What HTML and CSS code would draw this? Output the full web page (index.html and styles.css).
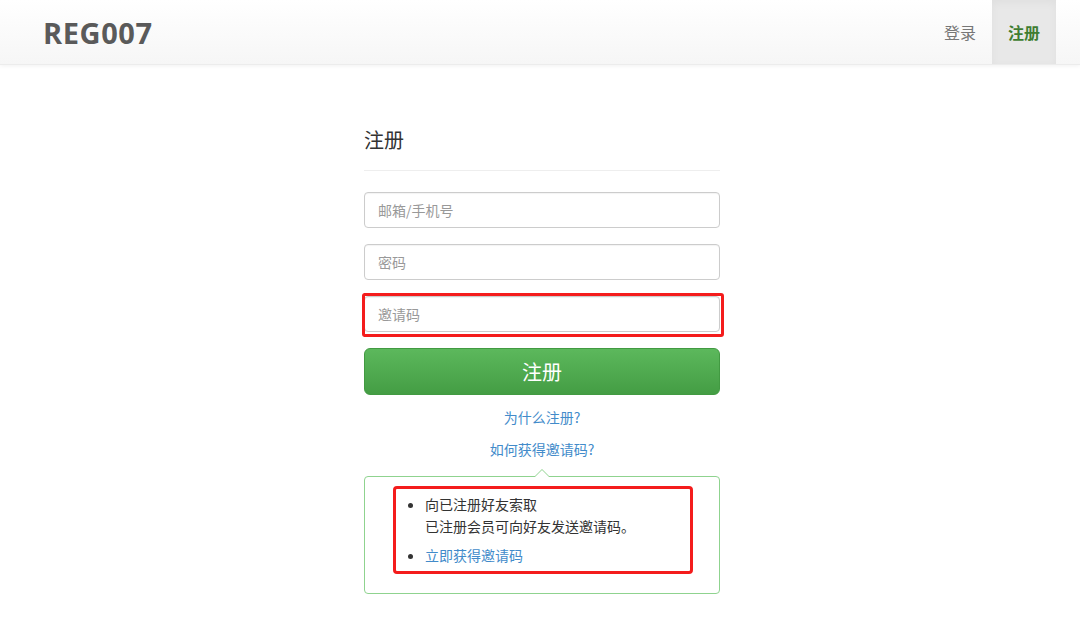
FILE: index.html
```html
<!DOCTYPE html>
<html lang="zh-CN">
<head>
  <meta charset="UTF-8" />
  <meta name="viewport" content="width=device-width, initial-scale=1.0"/>
  <title>REG007 - 注册</title>
  <link rel="stylesheet" href="styles.css">
</head>
<body>

  <nav class="navbar">
    <a class="brand" href="#">REG007</a>
    <ul class="nav-links">
      <li><a href="#">登录</a></li>
      <li class="active"><a href="#">注册</a></li>
    </ul>
  </nav>

  <div class="page">
    <h2 class="title">注册</h2>
    <hr>

    <form class="reg-form">
      <input type="text" placeholder="邮箱/手机号">
      <input type="password" placeholder="密码">
      <div class="marked-field">
        <input type="text" placeholder="邀请码">
      </div>
      <button type="button" class="btn-reg">注册</button>
    </form>

    <div class="help-links">
      <a href="#">为什么注册?</a>
      <a href="#">如何获得邀请码?</a>
    </div>

    <!-- popover -->
    <div class="invite-box">
      <ul class="invite-list">
        <li>向已注册好友索取<br>已注册会员可向好友发送邀请码。</li>
        <li><a href="#">立即获得邀请码</a></li>
      </ul>
    </div>
  </div>

</body>
</html>
```

FILE: styles.css
```css
body {
  margin: 0;
  font-family: "Noto Sans CJK SC", "Noto Sans", sans-serif;
  font-size: 14px;
  color: #333;
  background: #fff;
}

a {
  color: #428bca;
  text-decoration: none;
}

.navbar {
  display: flex;
  justify-content: space-between;
  align-items: stretch;
  height: 64px;
  background: linear-gradient(to bottom, #ffffff 0%, #f6f6f6 100%);
  border-bottom: 1px solid #ececec;
  box-shadow: 0 1px 4px rgba(0, 0, 0, 0.06);
}

.brand {
  display: flex;
  align-items: center;
  padding-left: 43px;
  font-family: "Open Sans", "Liberation Sans", sans-serif;
  font-weight: 700;
  font-size: 29px;
  letter-spacing: 0.6px;
  color: #5a5a5a;
}

.nav-links {
  display: flex;
  list-style: none;
  margin: 0 24px 0 0;
  padding: 0;
}

.nav-links li a {
  display: flex;
  align-items: center;
  height: 64px;
  padding: 0 16px;
  font-size: 16px;
  color: #777;
}

.nav-links li.active a {
  background: #e8e8e8;
  box-shadow: inset 0 3px 8px rgba(0, 0, 0, 0.04);
  color: #3f7d32;
  font-weight: 700;
}

.page {
  width: 356px;
  margin: 0 auto;
  padding-left: 4px;
}

.title {
  margin: 64px 0 0;
  font-size: 20px;
  font-weight: 400;
  line-height: 22px;
  color: #333;
}

hr {
  margin: 19px 0 21px;
  border: 0;
  border-top: 1px solid #eee;
}

.reg-form {
  display: flex;
  flex-direction: column;
  gap: 16px;
}

.reg-form input {
  box-sizing: border-box;
  width: 100%;
  height: 36px;
  padding: 0 13px;
  border: 1px solid #ccc;
  border-radius: 4px;
  font-family: inherit;
  font-size: 14px;
  color: #555;
  box-shadow: inset 0 1px 1px rgba(0, 0, 0, 0.05);
}

.reg-form input::placeholder {
  color: #999;
}

.marked-field {
  position: relative;
}

.marked-field::after {
  content: "";
  position: absolute;
  top: -3px;
  left: -2px;
  right: -4px;
  bottom: -5px;
  border: 3px solid #f41c1c;
  border-radius: 3px;
  pointer-events: none;
}

.btn-reg {
  height: 47px;
  border: 1px solid #429a42;
  border-radius: 6px;
  background: linear-gradient(to bottom, #5cb85c 0%, #449d44 100%);
  color: #fff;
  font-family: inherit;
  font-size: 20px;
  cursor: pointer;
}

.help-links {
  display: flex;
  flex-direction: column;
  align-items: center;
  gap: 12px;
  margin-top: 12px;
  line-height: 20px;
}

.invite-box {
  position: relative;
  margin-top: 17px;
  padding: 16px 0 27px 28px;
  border: 1px solid #8fd38f;
  border-radius: 4px;
}

.invite-box::before,
.invite-box::after {
  content: "";
  position: absolute;
  left: 50%;
  margin-left: -8px;
  border: 8px solid transparent;
  border-top: 0;
}

.invite-box::before {
  top: -8px;
  border-bottom-color: #8fd38f;
}

.invite-box::after {
  top: -7px;
  border-bottom-color: #fff;
}

.invite-list {
  position: relative;
  width: 300px;
  box-sizing: border-box;
  margin: 0;
  padding: 0 0 0 32px;
  line-height: 22px;
}

.invite-list li + li {
  margin-top: 7px;
}

.invite-list::after {
  content: "";
  position: absolute;
  top: -7px;
  left: 0;
  right: 0;
  bottom: -8px;
  border: 3px solid #f41c1c;
  border-radius: 4px;
  pointer-events: none;
}
```
